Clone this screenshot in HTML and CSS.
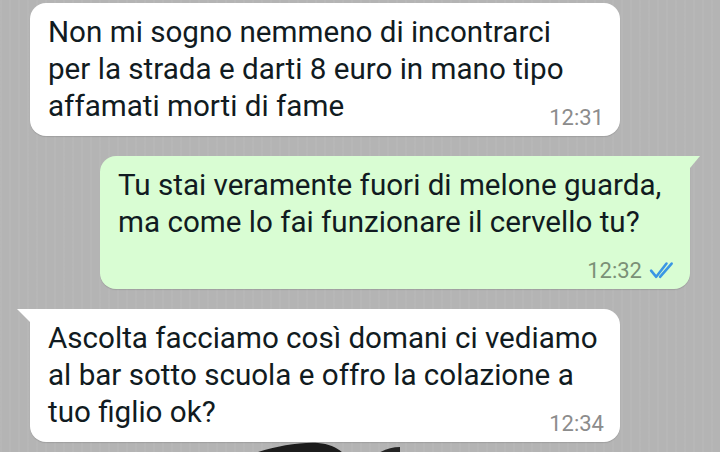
FILE: index.html
```html
<!DOCTYPE html>
<html>
<head>
    <meta charset="utf-8" />
    <title>Chat</title>
    <link rel="stylesheet" href="styles.css">
</head>
<body>
    <div class="chat">
        <div class="bubble bubbleIn">
            <p class="msgText">Non mi sogno nemmeno di incontrarci per la strada e darti 8 euro in mano tipo affamati morti di fame <span class="spacer"></span></p>
            <span class="meta">12:31</span>
        </div>

        <div class="bubble bubbleOut">
            <p class="msgText">Tu stai veramente fuori di melone guarda, ma come lo fai funzionare il cervello tu? <span class="spacer spacerOut"></span></p>
            <span class="meta">12:32
                <svg class="ticks" viewBox="0 0 20 14" width="28" height="18">
                    <path d="M1.5 7.5l4 4.8L13.5 2M8.5 12.3L17.5 2" fill="none" stroke="#3a96e4" stroke-width="2" stroke-linecap="round" stroke-linejoin="round" />
                </svg>
            </span>
        </div>

        <div class="bubble bubbleIn tailLeft">
            <p class="msgText">Ascolta facciamo così domani ci vediamo al bar sotto scuola e offro la colazione a tuo figlio ok? <span class="spacer"></span></p>
            <span class="meta">12:34</span>
        </div>

        <div class="sticker">
            <svg viewBox="0 0 160 12" width="160" height="12">
                <path d="M12 12 C32 5 58 0 78 1 C90 2 98 6 104 12 Z" fill="#1c1c1c" />
                <path d="M137 12 C145 7 152 5 160 5 L160 12 Z" fill="#242424" />
            </svg>
        </div>
    </div>
</body>
</html>
```

FILE: styles.css
```css
* {
    margin: 0;
    padding: 0;
    box-sizing: border-box;
}

body {
    width: 720px;
    height: 452px;
    overflow: hidden;
    font-family: Roboto, "Noto Sans", sans-serif;
    background-color: #b4b4b4;
    background-image: repeating-linear-gradient(90deg, rgba(255, 255, 255, 0.04) 0 2px, transparent 2px 9px);
}

.chat {
    display: flex;
    flex-direction: column;
    gap: 20px;
    padding-top: 3px;
}

.bubble {
    position: relative;
    width: 590px;
    padding: 11px 20px 11px 18px;
    border-radius: 16px;
    box-shadow: 0 1px 1px rgba(0, 0, 0, 0.12);
}

.bubbleIn {
    margin-left: 30px;
    background: #ffffff;
}

.bubbleOut {
    align-self: flex-end;
    margin-right: 30px;
    background: #d9fdd3;
    border-top-right-radius: 0;
}

.bubbleOut::before {
    content: "";
    position: absolute;
    top: 0;
    right: -10px;
    border-top: 12px solid #d9fdd3;
    border-right: 10px solid transparent;
}

.tailLeft {
    border-top-left-radius: 0;
}

.tailLeft::before {
    content: "";
    position: absolute;
    top: 0;
    left: -13px;
    border-top: 13px solid #ffffff;
    border-left: 13px solid transparent;
}

.msgText {
    font-size: 29.6px;
    line-height: 37px;
    color: #111b21;
}

.spacer {
    display: inline-block;
    width: 70px;
}

.spacerOut {
    width: 100px;
}

.meta {
    position: absolute;
    right: 16px;
    bottom: 7px;
    display: flex;
    align-items: center;
    gap: 6px;
    font-size: 22px;
    line-height: 22px;
    color: #8c8c8c;
}

.bubbleOut .meta {
    right: 14px;
    color: #7b9077;
}

.ticks {
    display: block;
    margin-top: -2px;
}

.sticker {
    margin-top: -20px;
    margin-left: 240px;
}

.sticker svg {
    display: block;
}
```
